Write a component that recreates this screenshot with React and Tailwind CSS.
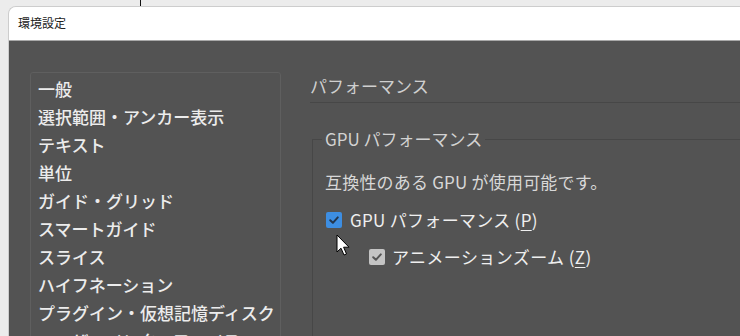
import React from "react";

const font = { fontFamily: '"Noto Sans CJK JP", "Noto Sans", sans-serif' };

function Check({ color }) {
  return (
    <svg width="12" height="12" viewBox="0 0 12 12" fill="none">
      <path d="M2.2 6.2 L4.9 8.8 L9.8 3.4" stroke={color} strokeWidth="2" strokeLinecap="round" strokeLinejoin="round" />
    </svg>
  );
}

export default function App() {
  const items = [
    "一般",
    "選択範囲・アンカー表示",
    "テキスト",
    "単位",
    "ガイド・グリッド",
    "スマートガイド",
    "スライス",
    "ハイフネーション",
    "プラグイン・仮想記憶ディスク",
    "ユーザーインターフェイス",
  ];
  return (
    <div className="relative h-[336px] w-[740px] overflow-hidden bg-[#ececec]" style={font}>
      <div className="h-[6px] flex">
        <div className="ml-[140px] w-px h-full bg-[#111]" />
      </div>
      <div className="flex pl-[8px] h-[330px]">
        <div className="flex-1 flex flex-col rounded-tl-[8px] border-l border-t border-[#cdcdcd] overflow-hidden">
          <div className="h-[34px] shrink-0 bg-white border-b border-[#a9a9a9] flex items-center pl-[9px] pb-[1px] text-[12px] text-[#222]">
            環境設定
          </div>
          <div className="flex-1 bg-[#535353] flex pl-[21px] pt-[31px]">
            <div className="w-[251px] h-[300px] shrink-0 border border-[#5f5f5f] rounded-[3px] pl-[7px] pt-[2px]">
              {items.map((t) => (
                <div key={t} className="text-[17px] leading-[28px] font-medium text-[#ececec] whitespace-nowrap">
                  {t}
                </div>
              ))}
            </div>
            <div className="flex-1 ml-[29px] flex flex-col">
              <div className="text-[17px] leading-[28px] text-[#cfcfcf]">パフォーマンス</div>
              <div className="mt-[2px] border-t border-[#474747]" />
              <div className="relative mt-[36px] ml-[2px] flex-1 border-t border-l border-[#474747] pl-[12px] pt-[28px]">
                <span className="absolute left-[9px] -top-[15px] px-[3px] bg-[#535353] text-[17px] leading-[28px] text-[#d2d2d2] whitespace-nowrap">
                  GPU パフォーマンス
                </span>
                <div className="text-[17px] leading-[28px] text-[#d8d8d8] whitespace-nowrap tracking-[0.2px]">
                  互換性のある GPU が使用可能です。
                </div>
                <div className="mt-[10px] flex items-center h-[28px] pl-[1px]">
                  <div className="w-[16px] h-[16px] rounded-[2px] bg-[#3d8ee2] flex items-center justify-center">
                    <Check color="#23364d" />
                  </div>
                  <span className="ml-[8px] text-[17px] leading-[28px] text-[#efefef] whitespace-nowrap tracking-[0.3px]">
                    GPU パフォーマンス (<span className="underline underline-offset-[3px]">P</span>)
                  </span>
                </div>
                <div className="mt-[9px] flex items-center h-[28px] pl-[44px]">
                  <div className="w-[16px] h-[16px] rounded-[2px] bg-[#c4c4c4] flex items-center justify-center">
                    <Check color="#555555" />
                  </div>
                  <span className="ml-[7px] text-[17px] leading-[28px] text-[#efefef] whitespace-nowrap tracking-[0.4px]">
                    アニメーションズーム (<span className="underline underline-offset-[3px]">Z</span>)
                  </span>
                </div>
              </div>
            </div>
          </div>
        </div>
      </div>
      <svg className="absolute left-[336px] top-[234px]" width="15" height="23" viewBox="0 0 15 23">
        <path d="M1 1 L1 18 L5 14.2 L8 21 L10.5 20 L7.6 13.2 L13 13.2 Z" fill="#fff" stroke="#000" strokeWidth="1" strokeLinejoin="round" />
      </svg>
    </div>
  );
}
